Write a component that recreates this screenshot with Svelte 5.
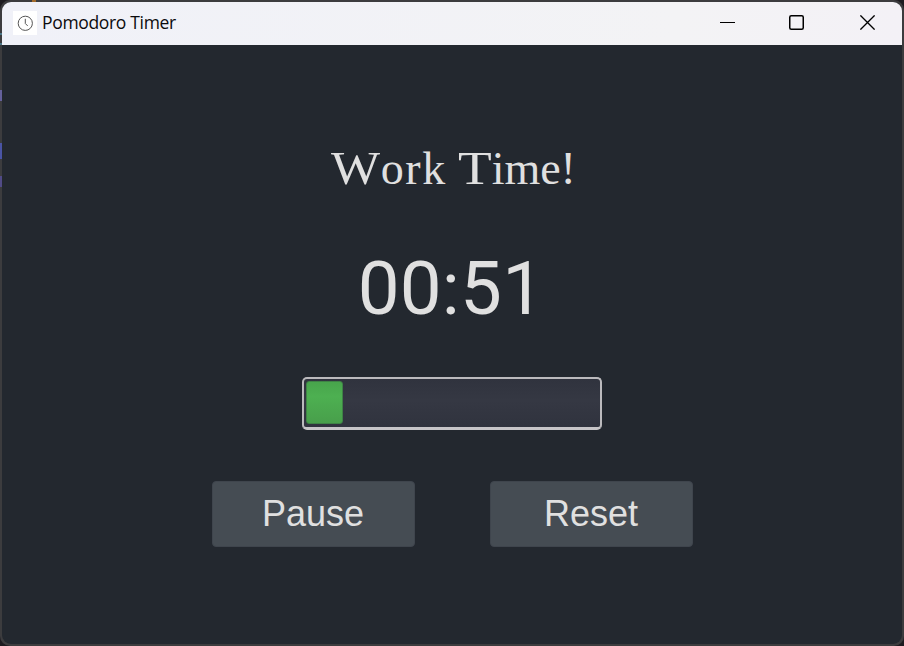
<script>
  let seconds = $state(51);
  let progress = $state(12.5);
  let time = $derived(
    String(Math.floor(seconds / 60)).padStart(2, '0') + ':' + String(seconds % 60).padStart(2, '0')
  );
</script>

<div class="desktop">
  <i class="speck teal"></i>
  <i class="speck teal lower"></i>
  <i class="speck hook"></i>
  <i class="speck block"></i>
  <i class="speck slash"></i>
  <i class="speck orange"></i>
  <div class="window">
    <header>
      <span class="app-icon">
        <svg width="24" height="24" viewBox="0 0 24 24" fill="none" stroke="#555" stroke-width="1">
          <circle cx="12.3" cy="12.3" r="7.1" />
          <path d="M12.3 7.8v4.7l2.4 2.4" />
        </svg>
      </span>
      <span class="caption">Pomodoro Timer</span>
      <div class="controls">
        <svg width="15" height="15" viewBox="0 0 15 15"><path d="M0 7.5h15" stroke="#000" /></svg>
        <svg width="15" height="15" viewBox="0 0 15 15"><rect x=".75" y=".75" width="13.5" height="13.5" rx="1.5" fill="none" stroke="#000" stroke-width="1.5" /></svg>
        <svg width="15" height="15" viewBox="0 0 15 15"><path d="M.4.4l14.2 14.2M14.6.4L.4 14.6" stroke="#000" stroke-width="1.35" /></svg>
      </div>
    </header>
    <main>
      <h1><span class="first"><span class="cap w">W</span>ork</span> <span class="second"><span class="cap t">T</span>ime!</span></h1>
      <div class="time">{time}</div>
      <div class="bar"><div class="fill" style="width: {progress}%"></div></div>
      <div class="buttons">
        <button>Pause</button>
        <button class="reset">Reset</button>
      </div>
    </main>
  </div>
</div>

<style>
  :global(body) { margin: 0; background: #1c1c22; }
  .desktop {
    position: relative;
    box-sizing: border-box;
    width: 904px;
    height: 646px;
    padding: 2px;
    overflow: hidden;
    background: #1d1b20;
  }
  .desktop::before {
    content: '';
    position: absolute;
    inset: 0;
    border-radius: 10px;
    background: #3c3c3e;
  }
  .speck { position: absolute; z-index: 1; left: 0; width: 2px; }
  .teal { top: 33px; height: 2px; background: #4a7486; }
  .lower { top: 43px; }
  .hook { top: 90px; height: 11px; background: #65619b; }
  .block { top: 143px; height: 16px; background: #4a54a4; }
  .slash { top: 176px; height: 11px; background: #514b86; }
  .orange { top: 0; left: 32px; width: 4px; height: 2px; background: #a36a2a; }
  .window {
    position: relative;
    z-index: 2;
    display: flex;
    flex-direction: column;
    width: 900px;
    height: 642px;
    border-radius: 9px;
    overflow: hidden;
    background: #23282f;
  }
  header {
    display: flex;
    align-items: center;
    box-sizing: border-box;
    height: 43px;
    padding: 0 27px 2px 11px;
    background: linear-gradient(90deg, #f0f1f8, #f3f3f5 75%, #f3f1f6);
  }
  .app-icon { width: 24px; height: 24px; background: #fff; }
  .app-icon svg, .controls svg { display: block; }
  .caption {
    margin: 0 0 2px 5px;
    font: 17.5px/24px "Open Sans", "Noto Sans", sans-serif;
    letter-spacing: -0.33px;
    color: #0b0b0d;
  }
  .controls { display: flex; gap: 56px; margin-left: auto; }
  .controls svg:first-child { margin-right: -2px; }
  main { display: flex; flex-direction: column; align-items: center; color: #e0e0e0; }
  h1 {
    display: flex;
    gap: 11px;
    margin: 96px 0 0 3px;
    font: 400 46px/56px "Liberation Serif", serif;
    white-space: nowrap;
  }
  .first { letter-spacing: 1.6px; }
  .second { letter-spacing: -0.1px; }
  .cap { display: inline-block; letter-spacing: 0; transform-origin: left; }
  .w { width: 49.5px; transform: scaleX(1.13); }
  .t { width: 34px; transform: scaleX(1.2); }
  .time {
    margin: 48px 2px 0 0;
    font: 400 74.5px/88px Roboto, sans-serif;
    letter-spacing: 0.2px;
  }
  .bar {
    box-sizing: border-box;
    width: 300px;
    height: 53px;
    margin-top: 44px;
    padding: 2px;
    border: 2px solid #bbbabd;
    border-bottom: 3px solid #c7c5c8;
    border-radius: 5px;
    background: linear-gradient(#30333e, #353843 45%, #30333e);
  }
  .fill {
    box-sizing: border-box;
    height: 43px;
    border: 1px solid #3e8345;
    border-radius: 3px;
    background: linear-gradient(#48a44c, #4db051 35%, #489f4b);
  }
  .buttons { display: flex; gap: 75px; margin-top: 51px; }
  button {
    box-sizing: border-box;
    width: 203px;
    height: 66px;
    padding: 0 0 1px;
    border: 1px solid #3f454d;
    border-radius: 4px;
    background: #454c53;
    color: #e0e0e0;
    font: 36px/1 "Liberation Sans", Arial, sans-serif;
  }
</style>
